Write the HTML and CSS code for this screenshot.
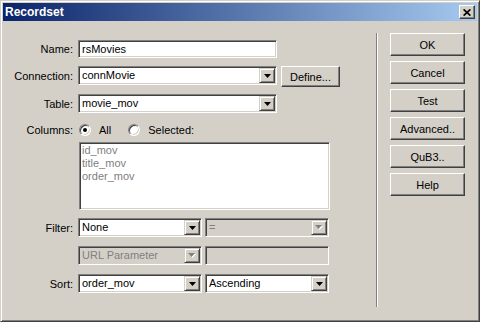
FILE: index.html
```html
<!DOCTYPE html>
<html lang="en">
<head>
  <meta charset="UTF-8">
  <title>Recordset</title>
  <link rel="stylesheet" href="styles.css">
</head>
<body>
  <div class="window">
    <div class="titlebar">
      <span class="title">Recordset</span>
      <span class="close-btn">
        <svg width="8" height="7" viewBox="0 0 8 7"><path d="M0.6 0.4 L7.4 6.6 M7.4 0.4 L0.6 6.6" stroke="#000" stroke-width="1.7"/></svg>
      </span>
    </div>

    <div class="client">
      <div class="form">
        <div class="row row-name">
          <span class="label">Name:</span>
          <div class="field w-wide">rsMovies</div>
        </div>

        <div class="row row-conn">
          <span class="label">Connection:</span>
          <div class="combo w-wide">
            <span class="combo-text">connMovie</span>
            <span class="combo-btn"><svg width="7" height="4" viewBox="0 0 7 4"><polygon points="0,0 7,0 3.5,4" fill="#000"/></svg></span>
          </div>
          <div class="btn btn-define">Define...</div>
        </div>

        <div class="row row-table">
          <span class="label">Table:</span>
          <div class="combo w-wide">
            <span class="combo-text">movie_mov</span>
            <span class="combo-btn"><svg width="7" height="4" viewBox="0 0 7 4"><polygon points="0,0 7,0 3.5,4" fill="#000"/></svg></span>
          </div>
        </div>

        <div class="row row-columns">
          <span class="label">Columns:</span>
          <span class="radio radio-all checked"></span>
          <span class="radio-label">All</span>
          <span class="radio radio-sel"></span>
          <span class="radio-label">Selected:</span>
        </div>

        <div class="row row-list">
          <span class="label"></span>
          <div class="listbox">
            <div class="list-item">id_mov</div>
            <div class="list-item">title_mov</div>
            <div class="list-item">order_mov</div>
          </div>
        </div>

        <div class="row row-filter">
          <span class="label">Filter:</span>
          <div class="combo w-half">
            <span class="combo-text">None</span>
            <span class="combo-btn"><svg width="7" height="4" viewBox="0 0 7 4"><polygon points="0,0 7,0 3.5,4" fill="#000"/></svg></span>
          </div>
          <div class="combo w-half disabled next">
            <span class="combo-text">=</span>
            <span class="combo-btn"><svg width="8" height="5" viewBox="0 0 8 5"><polygon points="1,1 8,1 4.5,5" fill="#fff"/><polygon points="0,0 7,0 3.5,4" fill="#808080"/></svg></span>
          </div>
        </div>

        <div class="row row-url">
          <span class="label"></span>
          <div class="combo w-half disabled">
            <span class="combo-text">URL Parameter</span>
            <span class="combo-btn"><svg width="8" height="5" viewBox="0 0 8 5"><polygon points="1,1 8,1 4.5,5" fill="#fff"/><polygon points="0,0 7,0 3.5,4" fill="#808080"/></svg></span>
          </div>
          <div class="field w-half disabled next"></div>
        </div>

        <div class="row row-sort">
          <span class="label">Sort:</span>
          <div class="combo w-half">
            <span class="combo-text">order_mov</span>
            <span class="combo-btn"><svg width="7" height="4" viewBox="0 0 7 4"><polygon points="0,0 7,0 3.5,4" fill="#000"/></svg></span>
          </div>
          <div class="combo w-half next">
            <span class="combo-text">Ascending</span>
            <span class="combo-btn"><svg width="7" height="4" viewBox="0 0 7 4"><polygon points="0,0 7,0 3.5,4" fill="#000"/></svg></span>
          </div>
        </div>
      </div>

      <div class="divider"></div>

      <div class="actions">
        <div class="btn">OK</div>
        <div class="btn">Cancel</div>
        <div class="btn">Test</div>
        <div class="btn">Advanced..</div>
        <div class="btn">QuB3..</div>
        <div class="btn">Help</div>
      </div>
    </div>
  </div>
</body>
</html>
```

FILE: styles.css
```css
* {
  box-sizing: border-box;
}

body {
  margin: 0;
  font-family: "Liberation Sans", Arial, sans-serif;
  font-size: 11px;
  color: #000;
  background-color: #d4d0c8;
}

/* window frame */
.window {
  width: 480px;
  height: 322px;
  padding: 2px;
  background-color: #d4d0c8;
  border: 1px solid;
  border-color: #d4d0c8 #404040 #404040 #d4d0c8;
  box-shadow: inset 1px 1px #fff, inset -1px -1px #808080;
}

.titlebar {
  height: 18px;
  display: flex;
  align-items: center;
  justify-content: space-between;
  padding: 0 2px;
  background: linear-gradient(to right, #0a246a, #a6caf0);
}

.title {
  color: #fff;
  font-weight: bold;
  font-size: 12px;
}

.close-btn {
  width: 16px;
  height: 14px;
  display: flex;
  align-items: center;
  justify-content: center;
  background-color: #d4d0c8;
  border: 1px solid;
  border-color: #fff #404040 #404040 #fff;
  box-shadow: inset -1px -1px #808080;
}

.client {
  display: flex;
}

/* left form */
.form {
  width: 337px;
  padding-top: 19px;
}

.row {
  display: flex;
  align-items: center;
}

.row-name { height: 18px; }
.row-conn { height: 19px; margin-top: 8px; }
.row-table { height: 19px; margin-top: 9px; }
.row-columns { height: 12px; margin-top: 11px; }
.row-list { height: 68px; margin-top: 6px; }
.row-filter { height: 19px; margin-top: 8px; }
.row-url { height: 19px; margin-top: 9px; }
.row-sort { height: 19px; margin-top: 9px; }

.label {
  width: 70px;
  margin-right: 5px;
  text-align: right;
  white-space: nowrap;
}

.w-wide { width: 199px; }
.w-half { width: 124px; }
.next { margin-left: 3px; }

.field {
  height: 18px;
  display: flex;
  align-items: center;
  padding: 0 3px;
  background-color: #fff;
  border: 1px solid;
  border-color: #808080 #fff #fff #808080;
  box-shadow: inset 1px 1px #404040, inset -1px -1px #d4d0c8;
}

.field.disabled {
  height: 19px;
  background-color: #d4d0c8;
}

.combo {
  height: 19px;
  display: flex;
  padding: 1px;
  background-color: #fff;
  border: 1px solid;
  border-color: #808080 #fff #fff #808080;
  box-shadow: inset 1px 1px #404040, inset -1px -1px #d4d0c8;
}

.combo-text {
  flex: 1;
  padding-left: 2px;
  line-height: 15px;
  white-space: nowrap;
  overflow: hidden;
}

.combo-btn {
  width: 16px;
  display: flex;
  align-items: center;
  justify-content: center;
  background-color: #d4d0c8;
  border: 1px solid;
  border-color: #d4d0c8 #404040 #404040 #d4d0c8;
  box-shadow: inset 1px 1px #fff, inset -1px -1px #808080;
}

.combo.disabled {
  background-color: #d4d0c8;
  color: #808080;
}

/* radios */
.radio {
  width: 12px;
  height: 12px;
  display: flex;
  align-items: center;
  justify-content: center;
  border-radius: 50%;
  background-color: #fff;
  border: 1px solid;
  border-color: #808080 #fff #fff #808080;
  box-shadow: inset 1px 1px #404040, inset -1px -1px #d4d0c8;
}

.radio.checked::after {
  content: "";
  width: 4px;
  height: 4px;
  border-radius: 50%;
  background-color: #000;
}

.radio-all { margin-left: 1px; }
.radio-sel { margin-left: 17px; }

.radio-label {
  margin-left: 8px;
}

.listbox {
  width: 251px;
  height: 68px;
  margin-left: 1px;
  align-self: flex-start;
  padding: 1px 2px;
  background-color: #fff;
  border: 1px solid;
  border-color: #808080 #fff #fff #808080;
  box-shadow: inset 1px 1px #404040, inset -1px -1px #d4d0c8;
}

.list-item {
  line-height: 13px;
  color: #808080;
}

/* buttons */
.btn {
  width: 75px;
  height: 23px;
  display: flex;
  align-items: center;
  justify-content: center;
  background-color: #d4d0c8;
  border: 1px solid;
  border-color: #fff #404040 #404040 #fff;
  box-shadow: inset -1px -1px #808080;
}

.btn-define {
  width: 59px;
  height: 21px;
  margin-left: 4px;
  align-self: flex-start;
}

.divider {
  width: 2px;
  height: 274px;
  margin: 12px 0 0 36px;
  border-left: 1px solid #808080;
  border-right: 1px solid #fff;
}

.actions {
  display: flex;
  flex-direction: column;
  gap: 5px;
  margin: 12px 0 0 12px;
}
```
